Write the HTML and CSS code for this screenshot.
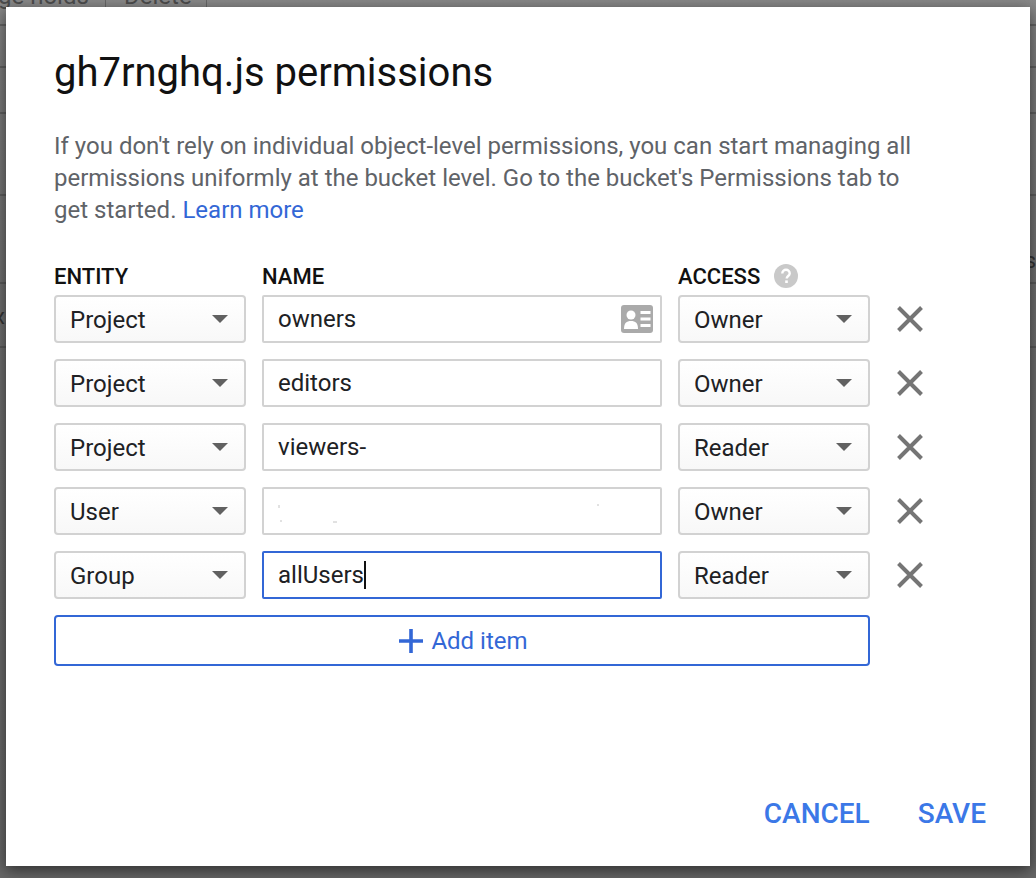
FILE: index.html
```html
<!DOCTYPE html>
<html lang="en">
<head>
    <meta charset="UTF-8">
    <title>gh7rnghq.js permissions</title>
    <link rel="stylesheet" href="styles.css">
</head>
<body>
    <!-- page behind the dialog, only the edges show -->
    <div class="backdrop">
        <div class="backdrop-top"><span class="backdrop-hold">ge holds</span><span class="backdrop-del">Delete</span></div>
        <div class="backdrop-row backdrop-row-1"></div>
        <div class="backdrop-row backdrop-row-2"></div>
        <div class="backdrop-row backdrop-row-3"></div>
        <div class="backdrop-row backdrop-row-4"><span class="backdrop-letter">s</span></div>
        <div class="backdrop-row backdrop-row-5"><span class="backdrop-mark">x</span></div>
        <div class="backdrop-row backdrop-row-6"></div>
    </div>

    <div class="dialog">
        <h1 class="dialog-title">gh7rnghq.js permissions</h1>
        <p class="dialog-text">If you don't rely on individual object-level permissions, you can start managing all permissions uniformly at the bucket level. Go to the bucket's Permissions tab to get started. <a class="link" href="#">Learn more</a></p>

        <div class="table">
            <div class="head-row">
                <div class="col-entity">ENTITY</div>
                <div class="col-name">NAME</div>
                <div class="col-access">ACCESS
                    <svg class="help-icon" viewBox="0 0 24 24" width="24" height="24"><circle cx="12" cy="12" r="12" fill="#c9c9c9"/><path d="M8.3 9.4a3.7 3.7 0 0 1 7.4 0c0 2.5-3 2.7-3 5.1" fill="none" stroke="#fff" stroke-width="2.4"/><rect x="11.2" y="16.4" width="2.6" height="2.6" fill="#fff"/></svg>
                </div>
            </div>

            <div class="row">
                <div class="select col-entity">Project<span class="caret"></span></div>
                <div class="field col-name">owners
                    <svg class="card-icon" viewBox="0 0 32 28" width="32" height="28"><rect width="32" height="28" rx="3" fill="#aaa"/><circle cx="10" cy="10" r="4.500" fill="#fff"/><path d="M3 24c0-6 2.500-8 7-8s7 2 7 8z" fill="#fff"/><path d="M19.500 7.500h10M19.500 14h10M19.500 20.500h10" stroke="#fff" stroke-width="3"/></svg>
                </div>
                <div class="select col-access">Owner<span class="caret"></span></div>
                <svg class="remove" viewBox="0 0 26 26" width="26" height="26"><path d="M1.500 1.500l23 23M24.500 1.500l-23 23" stroke="#757575" stroke-width="4"/></svg>
            </div>

            <div class="row">
                <div class="select col-entity">Project<span class="caret"></span></div>
                <div class="field col-name">editors</div>
                <div class="select col-access">Owner<span class="caret"></span></div>
                <svg class="remove" viewBox="0 0 26 26" width="26" height="26"><path d="M1.500 1.500l23 23M24.500 1.500l-23 23" stroke="#757575" stroke-width="4"/></svg>
            </div>

            <div class="row">
                <div class="select col-entity">Project<span class="caret"></span></div>
                <div class="field col-name">viewers-</div>
                <div class="select col-access">Reader<span class="caret"></span></div>
                <svg class="remove" viewBox="0 0 26 26" width="26" height="26"><path d="M1.500 1.500l23 23M24.500 1.500l-23 23" stroke="#757575" stroke-width="4"/></svg>
            </div>

            <div class="row">
                <div class="select col-entity">User<span class="caret"></span></div>
                <div class="field col-name">
                    <!-- leftovers of the blanked out address -->
                    <svg class="specks" viewBox="0 0 330 24" width="330" height="24"><path d="M1 6v3M2 22h2M55 23h4M319 6h2" stroke="#c4c4c4" stroke-width="1"/></svg>
                </div>
                <div class="select col-access">Owner<span class="caret"></span></div>
                <svg class="remove" viewBox="0 0 26 26" width="26" height="26"><path d="M1.500 1.500l23 23M24.500 1.500l-23 23" stroke="#757575" stroke-width="4"/></svg>
            </div>

            <div class="row">
                <div class="select col-entity">Group<span class="caret"></span></div>
                <div class="field field-focus col-name">allUsers<span class="text-cursor"></span></div>
                <div class="select col-access">Reader<span class="caret"></span></div>
                <svg class="remove" viewBox="0 0 26 26" width="26" height="26"><path d="M1.500 1.500l23 23M24.500 1.500l-23 23" stroke="#757575" stroke-width="4"/></svg>
            </div>

            <button class="add-btn">
                <svg viewBox="0 0 26 26" width="26" height="26"><path d="M13 1v24M1 13h24" stroke="#3367d6" stroke-width="3.600"/></svg>
                Add item
            </button>
        </div>

        <div class="actions">
            <button class="text-btn">CANCEL</button>
            <button class="text-btn">SAVE</button>
        </div>
    </div>
</body>
</html>
```

FILE: styles.css
```css
html, body {
    height: 100%;
}

body {
    margin: 0;
    padding: 7px 6px 12px;
    box-sizing: border-box;
    background-color: #6f6f6f;
    background-image: linear-gradient(to bottom, #888 0, #7c7c7c 60px, #6e6e6e 300px, #666 878px);
    font-family: Roboto, "Liberation Sans", sans-serif;
    overflow: hidden;
    color: #111;
}

/* page behind the dialog */
.backdrop {
    position: absolute;
    top: 0;
    left: 0;
    width: 1036px;
    height: 878px;
    overflow: hidden;
}

.backdrop-top {
    height: 7px;
    position: relative;
    font-size: 24px;
    color: #4c4c4c;
}

.backdrop-hold {
    position: absolute;
    left: -2px;
    top: -18px;
    padding-right: 16px;
    border-right: 1px solid #666;
}

.backdrop-del {
    position: absolute;
    left: 124px;
    top: -18px;
    padding-right: 14px;
    border-right: 1px solid #666;
}

.backdrop-row {
    position: absolute;
    left: 0;
    width: 100%;
    border-top: 2px solid rgba(70, 70, 70, 0.5);
}

.backdrop-row-1 { top: 24px; }
.backdrop-row-2 { top: 66px; }
.backdrop-row-3 { top: 112px; }
.backdrop-row-4 { top: 194px; }
.backdrop-row-5 { top: 282px; }
.backdrop-row-6 { top: 346px; }

.backdrop-letter {
    position: absolute;
    right: 0;
    top: 52px;
    font-size: 22px;
    line-height: 26px;
    color: #333;
}

.backdrop-mark {
    position: absolute;
    left: -6px;
    top: 20px;
    font-size: 22px;
    line-height: 26px;
    color: #333;
}

.dialog {
    position: relative;
    width: 1024px;
    height: 859px;
    box-sizing: border-box;
    padding: 48px 48px 0;
    background-color: #fff;
    box-shadow: 0 4px 14px rgba(0, 0, 0, 0.55);
    display: flex;
    flex-direction: column;
}

.dialog-title {
    margin: 0;
    font-size: 40px;
    line-height: 36px;
    font-weight: 400;
    color: #111;
}

.dialog-text {
    margin: 39px 0 0;
    width: 880px;
    font-size: 24px;
    line-height: 32px;
    color: #5f6368;
}

.link {
    color: #3367d6;
    text-decoration: none;
}

.table {
    margin-top: 35px;
    width: 880px;
}

.head-row {
    display: flex;
    gap: 16px;
    height: 34px;
    box-sizing: border-box;
    padding-bottom: 4px;
    align-items: center;
    font-size: 22px;
    font-weight: 500;
    color: #111;
}

.col-entity, .col-access {
    width: 192px;
    flex: none;
    box-sizing: border-box;
}

.col-name {
    width: 400px;
    flex: none;
    box-sizing: border-box;
}

.col-access {
    display: flex;
    align-items: center;
    gap: 14px;
}

.row {
    display: flex;
    gap: 16px;
    align-items: center;
    height: 48px;
    margin-bottom: 16px;
}

.select, .field {
    height: 48px;
    display: flex;
    align-items: center;
    padding: 0 14px;
    font-size: 24px;
    color: #202124;
    border: 2px solid #d2d2d2;
}

.select {
    justify-content: space-between;
    padding-top: 2px;
    border-radius: 4px;
    background-image: linear-gradient(to bottom, #fff, #f8f8f8);
}

.select .caret {
    margin-right: 2px;
    margin-bottom: 2px;
}

.field {
    justify-content: space-between;
    border-radius: 2px;
    background-color: #fff;
}

.field-focus {
    justify-content: flex-start;
    border-color: #3367d6;
}

.text-cursor {
    width: 2px;
    height: 28px;
    background-color: #111;
}

.caret {
    width: 0;
    height: 0;
    border-left: 8px solid transparent;
    border-right: 8px solid transparent;
    border-top: 8px solid #616161;
}

.card-icon {
    margin-right: -7px;
}

.specks {
    flex: none;
}

.remove {
    margin-left: 11px;
    flex: none;
}

.add-btn {
    display: flex;
    align-items: center;
    justify-content: center;
    gap: 7px;
    width: 816px;
    height: 51px;
    padding: 0 0 0 2px;
    border: 2px solid #3367d6;
    border-radius: 4px;
    background-color: #fff;
    color: #3367d6;
    font-family: inherit;
    font-size: 24px;
}

.actions {
    margin-top: auto;
    margin-right: -4px;
    margin-bottom: 36px;
    display: flex;
    justify-content: flex-end;
    gap: 48px;
}

.text-btn {
    padding: 0;
    border: none;
    background: none;
    color: #3b78e7;
    font-family: inherit;
    font-size: 28px;
    font-weight: 500;
    line-height: 32px;
}
```
